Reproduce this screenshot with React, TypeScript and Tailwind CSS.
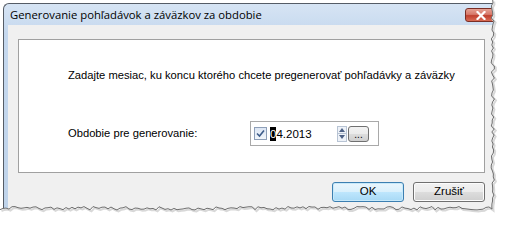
import React from "react";

// torn paper edge points along right and bottom sides
function tornPath() {
  let seed = 7;
  const rnd = () => {
    seed = (seed * 9301 + 49297) % 233280;
    return seed / 233280;
  };
  const right: [number, number][] = [];
  for (let y = 0; y <= 208; y += 3) right.push([491 + rnd() * 3.5, y]);
  const bottom: [number, number][] = [];
  for (let x = 492; x >= 0; x -= 3) bottom.push([x, 206.5 + rnd() * 3.5]);
  return [...right, ...bottom];
}

function TornEdge() {
  const pts = tornPath();
  const line = pts.map((p) => p.join(",")).join(" ");
  const fill = `${line} 0,219 505,219 505,0`;
  const shadow = pts.map(([x, y]) => `${x + 1.5},${y + 1.5}`).join(" ");
  return (
    <svg className="pointer-events-none absolute left-0 top-0" width="505" height="219" viewBox="0 0 505 219">
      <polygon points={fill} fill="#ffffff" />
      <polyline points={shadow} fill="none" stroke="#d8d8d8" strokeWidth="2" />
      <polyline points={line} fill="none" stroke="#6e6e6e" strokeWidth="1" />
    </svg>
  );
}

function WinButton({ label, primary }: { label: string; primary?: boolean }) {
  return (
    <button
      className={
        "h-[20px] w-[72px] rounded-[3px] border text-[11.5px] text-black " +
        (primary
          ? "border-[#3c7fb1] bg-[linear-gradient(#eaf6fd_0%,#d9f0fc_50%,#bee6fd_50%,#a7d9f5_100%)] shadow-[inset_0_0_0_1px_#c7e9fa]"
          : "border-[#707070] bg-[linear-gradient(#f2f2f2_0%,#ebebeb_50%,#dddddd_50%,#cfcfcf_100%)] shadow-[inset_0_0_0_1px_#fcfcfc]")
      }
    >
      {label}
    </button>
  );
}

function DatePicker() {
  return (
    <div className="flex h-[25px] w-[129px] items-center border border-[#a9a9a9] bg-white pl-[3px] pr-[9px]">
      <span className="flex h-[13px] w-[13px] items-center justify-center border border-[#8e9fb8] bg-[linear-gradient(#dce6f4,#f2f6fb)]">
        <svg width="9" height="9" viewBox="0 0 9 9">
          <path d="M1 4.5 L3.5 7 L8 1.5" fill="none" stroke="#3d5c8a" strokeWidth="1.6" />
        </svg>
      </span>
      <span className="ml-[3px] flex text-[11.5px] leading-[14px] text-black">
        <span className="bg-black text-white">0</span>
        <span>4.2013</span>
      </span>
      <span className="ml-auto flex h-[16px] w-[10px] flex-col border border-[#b8c4d4] bg-[#eef2f8]">
        <span className="flex flex-1 items-center justify-center">
          <svg width="6" height="4" viewBox="0 0 6 4">
            <path d="M0 4 L3 0 L6 4 Z" fill="#4d6185" />
          </svg>
        </span>
        <span className="flex flex-1 items-center justify-center border-t border-[#b8c4d4]">
          <svg width="6" height="4" viewBox="0 0 6 4">
            <path d="M0 0 L3 4 L6 0 Z" fill="#4d6185" />
          </svg>
        </span>
      </span>
      <span className="ml-[1px] flex h-[16px] w-[21px] items-end justify-center rounded-[3px] border border-[#707070] bg-[linear-gradient(#f2f2f2_0%,#ebebeb_50%,#dddddd_50%,#cfcfcf_100%)] pb-[2px] text-[10px] leading-[8px] text-black">
        ...
      </span>
    </div>
  );
}

export default function App() {
  return (
    <div className="relative h-[219px] w-[505px] overflow-hidden bg-white font-['Liberation_Sans',Arial,sans-serif]">
      <div className="ml-[3px] mt-[3px] flex h-[206px] w-[492px] flex-col rounded-tl-[6px] border-l border-t border-[#555c66] bg-[linear-gradient(#d6e4f4,#c5d8ee_30px,#bfd3ea)]">
        {/* title bar */}
        <div className="relative flex h-[21px] items-center pl-[6px]">
          <span className="font-['Open_Sans','Noto_Sans',sans-serif] text-[11.3px] leading-none text-black">
            Generovanie pohľadávok a záväzkov za obdobie
          </span>
          <span className="absolute left-[461px] top-[4px] flex h-[14px] w-[31px] items-center justify-center rounded-[3px] border border-[#7a2e25] bg-[linear-gradient(#e6a193_0%,#d7796a_45%,#c0402f_55%,#d96c55_100%)]">
            <svg width="10" height="9" viewBox="0 0 10 9">
              <path d="M1.5 1 L8.5 8 M8.5 1 L1.5 8" stroke="#ffffff" strokeWidth="2.2" strokeLinecap="square" />
            </svg>
          </span>
        </div>
        {/* client area */}
        <div className="ml-[4px] flex flex-1 flex-col bg-[#f0f0f0]">
          <div className="ml-[10px] mr-[10px] mt-[14px] flex h-[134px] flex-col border border-[#a0a0a0] bg-white pl-[49px] text-[11.2px] text-black">
            <p className="mt-[29px] leading-[13px]">
              Zadajte mesiac, ku koncu ktorého chcete pregenerovať pohľadávky a záväzky
            </p>
            <div className="mt-[39px] flex items-center">
              <span className="w-[182px]">Obdobie pre generovanie:</span>
              <DatePicker />
            </div>
          </div>
          <div className="mt-[9px] flex justify-end gap-[9px] pr-[10px]">
            <WinButton label="OK" primary />
            <WinButton label="Zrušiť" />
          </div>
        </div>
      </div>
      <TornEdge />
    </div>
  );
}
